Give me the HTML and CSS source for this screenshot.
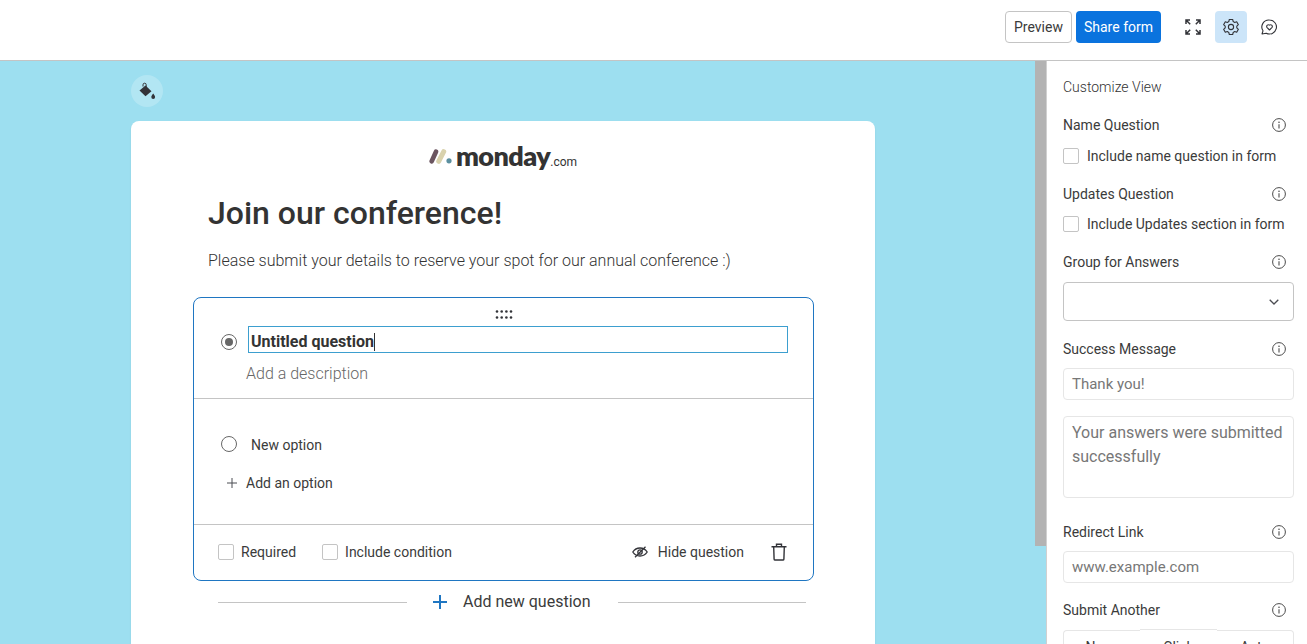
FILE: index.html
```html
<!DOCTYPE html>
<html lang="en">
<head>
<meta charset="utf-8">
<title>Form editor</title>
<link rel="stylesheet" href="styles.css">
</head>
<body>
<svg class="sprite" width="0" height="0" aria-hidden="true"><defs><symbol id="info" viewBox="0 0 14 14"><circle cx="7" cy="7" r="6.400" fill="none" stroke="#4b4b4b" stroke-width="1"/><path d="M7 6.200V10.500" stroke="#4b4b4b" stroke-width="1.100"/><circle cx="7" cy="4.200" r=".8" fill="#4b4b4b"/></symbol></defs></svg>
<header class="topbar">
  <button class="btn btn-outline">Preview</button>
  <button class="btn btn-primary">Share form</button>
  <span class="tool">
    <svg width="18" height="18" viewBox="0 0 18 18" fill="none" stroke="#323338" stroke-width="1.5"><path d="M2 6V2h4M2 2l4.200 4.200M16 6V2h-4M16 2l-4.200 4.200M2 12v4h4M2 16l4.200-4.200M16 12v4h-4M16 16l-4.200-4.200"/></svg>
  </span>
  <span class="tool tool-active">
    <svg width="18" height="18" viewBox="0 0 18 18" fill="none" stroke="#323338" stroke-width="1.1"><path d="M7.3 1.5h3.4l.5 2.1 1.5.8 2-.7 1.700 3-1.600 1.400v1.800l1.600 1.400-1.700 3-2-.7-1.500.8-.5 2.100H7.300l-.5-2.100-1.500-.8-2 .7-1.700-3L3.200 9.900V8.100L1.600 6.700l1.700-3 2 .7 1.500-.8z" stroke-linejoin="round"/><circle cx="9" cy="9" r="2.600"/></svg>
  </span>
  <span class="tool">
    <svg width="18" height="18" viewBox="0 0 18 18" fill="none" stroke="#323338" stroke-width="1.100"><path d="M9.500 2a7 7 0 1 1-3.300 13.200L2 16l1-3.200A7 7 0 0 1 9.500 2z" stroke-linejoin="round"/><path d="M9.500 12L6.900 9.300a1.700 1.700 0 0 1 2.600-2.100 1.700 1.700 0 0 1 2.600 2.100z" stroke-linejoin="round"/></svg>
  </span>
</header>
<main class="workspace">
  <section class="canvas">
    <div class="paint">
      <svg width="20" height="20" viewBox="0 0 20 20"><path d="M6 5.500V3.800a1.600 1.600 0 0 1 3.200 0V7" fill="none" stroke="#323338" stroke-width="1"/><path d="M2.500 9.500L8.500 4.500l6 5.800-6 5z" fill="#323338"/><path d="M16.200 12.500c1.100 1.500 1.900 2.500 1.900 3.500a1.900 1.900 0 0 1-3.800 0c0-1 .8-2 1.900-3.500z" fill="#323338"/></svg>
    </div>
    <article class="card">
      <div class="logo">
        <svg class="logo-mark" width="23" height="15" viewBox="0 0 23 15"><path d="M2.700 12.300L7 2.700" stroke="#6b5560" stroke-width="4.600" stroke-linecap="round"/><path d="M9.700 12.300L14.700 2.700" stroke="#d9d2ad" stroke-width="5" stroke-linecap="round"/><circle cx="20" cy="11.800" r="2.600" fill="#5b8f9f"/></svg>
        <span class="logo-word">monday</span><span class="logo-com">.com</span>
      </div>
      <h1 class="title">Join our conference!</h1>
      <p class="subtitle">Please submit your details to reserve your spot for our annual conference :)</p>
      <div class="question">
        <div class="handle">
          <svg width="18" height="9" viewBox="0 0 18 9" fill="#323338"><circle cx="2" cy="1.500" r="1.300"/><circle cx="6.700" cy="1.500" r="1.300"/><circle cx="11.400" cy="1.500" r="1.300"/><circle cx="16" cy="1.500" r="1.300"/><circle cx="2" cy="7.500" r="1.300"/><circle cx="6.700" cy="7.500" r="1.300"/><circle cx="11.400" cy="7.500" r="1.300"/><circle cx="16" cy="7.500" r="1.300"/></svg>
        </div>
        <div class="q-head">
          <span class="radio radio-on"></span>
          <div class="q-input"><span class="q-text">Untitled question</span><span class="caret"></span></div>
        </div>
        <div class="q-desc">Add a description</div>
        <div class="q-options">
          <div class="option"><span class="radio"></span><span class="option-label">New option</span></div>
          <div class="add-option">
            <svg width="10" height="10" viewBox="0 0 10 10" stroke="#4b4c52" stroke-width="1"><path d="M5 0v10M0 5h10"/></svg>
            <span>Add an option</span>
          </div>
        </div>
        <div class="q-foot">
          <label class="check"><span class="box"></span>Required</label>
          <label class="check"><span class="box"></span>Include condition</label>
          <span class="hide-q">
            <svg width="16" height="12" viewBox="0 0 16 12" fill="none" stroke="#323338" stroke-width="1.300"><path d="M.8 6C2.500 3.400 5 2 8 2s5.500 1.400 7.200 4C13.500 8.600 11 10 8 10S2.500 8.600.8 6z"/><circle cx="8" cy="6" r="2.200"/><path d="M13.500.8L3 11.200"/></svg>
            Hide question
          </span>
          <svg class="trash" width="16" height="18" viewBox="0 0 16 18" fill="none" stroke="#323338" stroke-width="1.400"><path d="M.5 3.700h15M5.500 3.500V1.200h5v2.300M2.700 3.700l.4 12.400a1 1 0 0 0 1 .9h7.800a1 1 0 0 0 1-.9l.4-12.400"/></svg>
        </div>
      </div>
      <div class="add-question">
        <span class="rule rule-left"></span>
        <svg class="add-plus" width="14" height="14" viewBox="0 0 14 14" stroke="#1f76c2" stroke-width="2"><path d="M7 0v14M0 7h14"/></svg>
        <span class="add-label">Add new question</span>
        <span class="rule rule-right"></span>
      </div>
    </article>
    <div class="scroll-thumb"></div>
  </section>
  <aside class="panel">
    <h2 class="panel-title">Customize View</h2>

    <div class="field-head field-first"><span>Name Question</span><svg class="info"><use href="#info"/></svg></div>
    <label class="panel-check"><span class="box"></span>Include name question in form</label>

    <div class="field-head field-updates"><span>Updates Question</span><svg class="info"><use href="#info"/></svg></div>
    <label class="panel-check panel-check-tight"><span class="box"></span>Include Updates section in form</label>

    <div class="field-head field-group"><span>Group for Answers</span><svg class="info"><use href="#info"/></svg></div>
    <div class="select">
      <svg width="10" height="6" viewBox="0 0 10 6" fill="none" stroke="#4b4c52" stroke-width="1.300"><path d="M.7.7L5 5l4.300-4.300"/></svg>
    </div>

    <div class="field-head field-success"><span>Success Message</span><svg class="info"><use href="#info"/></svg></div>
    <div class="input input-thanks">Thank you!</div>
    <div class="textarea">Your answers were submitted successfully</div>

    <div class="field-head field-redirect"><span>Redirect Link</span><svg class="info"><use href="#info"/></svg></div>
    <div class="input input-link">www.example.com</div>

    <div class="field-head field-submit"><span>Submit Another</span><svg class="info"><use href="#info"/></svg></div>
    <div class="segments">
      <span class="segment">None</span>
      <span class="segment segment-mid">Click</span>
      <span class="segment">Auto</span>
    </div>
  </aside>
</main>
</body>
</html>
```
FILE: styles.css
```css
* { box-sizing: border-box; }
html, body { margin: 0; height: 100%; overflow: hidden; }
body {
  font-family: Roboto, "Liberation Sans", sans-serif;
  color: #3b3b3b;
  background: #fff;
  display: flex;
  flex-direction: column;
}
.sprite { display: none; }
.topbar {
  height: 61px;
  flex: none;
  display: flex;
  align-items: flex-start;
  padding: 11px 22px 0 0;
  justify-content: flex-end;
  border-bottom: 1px solid #c4c4c4;
  background: #fff;
}
.btn {
  height: 32px;
  border-radius: 4px;
  font: 400 14px/1 Roboto, sans-serif;
  padding: 0;
}
.btn-outline {
  width: 67px;
  margin-right: 4px;
  background: #fff;
  color: #3b3b3b;
  border: 1px solid #c4c4c4;
}
.btn-primary {
  width: 85px;
  margin-right: 10px;
  background: #0a73de;
  color: #fff;
  border: 0;
}
.tool {
  width: 32px;
  height: 32px;
  margin-left: 6px;
  border-radius: 4px;
  display: flex;
  align-items: center;
  justify-content: center;
}
.tool-active { background: #cce5f9; }
.workspace { flex: 1; display: flex; min-height: 0; }
.canvas {
  flex: none;
  width: 1046px;
  position: relative;
  background: #9ddff0;
  padding: 14px 0 0 131px;
  overflow: hidden;
}
.paint {
  width: 32px;
  height: 32px;
  border-radius: 50%;
  background: rgba(255, 255, 255, .22);
  display: flex;
  align-items: center;
  justify-content: center;
}
.card {
  width: 744px;
  height: 600px;
  margin-top: 14px;
  background: #fff;
  border-radius: 8px;
  padding-top: 21px;
  box-shadow: 0 1px 2px rgba(0, 0, 0, .08);
}
.logo {
  display: flex;
  justify-content: center;
  align-items: baseline;
  height: 28px;
}
.logo-mark { margin-right: 4px; align-self: center; }
.logo-word {
  font: 800 27px/28px Lato, sans-serif;
  color: #333;
  letter-spacing: -.55px;
}
.logo-com { font: 400 12px/1 Roboto, sans-serif; color: #333; }
.title {
  margin: 21px 0 0 77px;
  font: 500 32px/44px Roboto, sans-serif;
  color: #333;
}
.subtitle {
  margin: 14px 0 0 77px;
  font: 300 16px/24px Roboto, sans-serif;
  color: #333;
  height: 24px;
}
.question {
  width: 621px;
  height: 284px;
  margin: 24px 0 0 62px;
  border: 1px solid #1f76c2;
  border-radius: 8px;
  display: flex;
  flex-direction: column;
}
.handle { height: 28px; padding-top: 12px; display: flex; justify-content: center; }
.handle svg { display: block; }
.q-head { display: flex; align-items: center; height: 27px; padding-left: 27px; }
.radio {
  width: 16px;
  height: 16px;
  border: 1px solid #676767;
  border-radius: 50%;
  flex: none;
  display: flex;
  align-items: center;
  justify-content: center;
}
.radio-on { margin-top: 5px; }
.radio-on::after {
  content: "";
  width: 8px;
  height: 8px;
  border-radius: 50%;
  background: #676767;
}
.q-input {
  width: 540px;
  height: 27px;
  margin-left: 11px;
  border: 1px solid #3d9fcf;
  padding: 4px 0 0 2px;
  display: flex;
  align-items: center;
}
.q-text { font: 700 16px/1 Roboto, sans-serif; color: #333; }
.caret { width: 1px; height: 18px; background: #333; }
.q-desc {
  height: 46px;
  padding: 10px 0 0 52px;
  font: 300 16px/22px Roboto, sans-serif;
  color: #676767;
  border-bottom: 1px solid #c4c4c4;
}
.q-options { height: 126px; border-bottom: 1px solid #c4c4c4; padding: 37px 0 0 27px; }
.option { display: flex; align-items: center; height: 16px; }
.option-label { margin-left: 14px; font: 400 14px/16px Roboto, sans-serif; position: relative; top: 1px; }
.add-option {
  display: flex;
  align-items: center;
  margin-top: 23px;
  padding-left: 6px;
  font: 400 14px/16px Roboto, sans-serif;
  height: 16px;
}
.add-option span { margin-left: 9px; }
.q-foot {
  flex: 1;
  display: flex;
  align-items: center;
  padding: 0 26px 2px 24px;
  font: 400 14px/16px Roboto, sans-serif;
}
.check { display: flex; align-items: center; margin-right: 26px; }
.box {
  width: 16px;
  height: 16px;
  border: 1px solid #c4c4c4;
  border-radius: 2px;
  margin-right: 7px;
  flex: none;
}
.hide-q { display: flex; align-items: center; margin-left: auto; gap: 10px; }
.trash { margin-left: 27px; }
.add-question { display: flex; align-items: center; height: 42px; margin-left: 87px; white-space: nowrap; }
.rule { height: 1px; background: #c4c4c4; flex: none; margin-top: 1px; }
.rule-left { width: 189px; }
.rule-right { width: 188px; margin-left: 27px; }
.add-plus { margin-left: 26px; flex: none; }
.add-label { margin-left: 16px; font: 400 16px/1 Roboto, sans-serif; flex: none; }
.scroll-thumb {
  position: absolute;
  right: 0;
  top: 0;
  width: 11px;
  height: 485px;
  background: #b3b3b3;
}
.panel {
  flex: 1;
  min-width: 0;
  padding: 0 13px 0 16px;
  background: #fff;
  border-left: 1px solid #d0d0d0;
  overflow: hidden;
  font-size: 14px;
  line-height: 16px;
}
.panel-title { margin: 18px 0 0; font: 300 14px/16px Roboto, sans-serif; color: #333; }
.field-head { display: flex; justify-content: space-between; align-items: center; height: 16px; }
.info { width: 14px; height: 14px; margin-right: 8px; flex: none; }
.field-first { margin-top: 22px; }
.field-updates { margin-top: 22px; }
.field-group { margin-top: 22px; }
.field-success { margin-top: 20px; }
.field-redirect { margin-top: 26px; }
.field-submit { margin-top: 19px; }
.panel-check { display: flex; align-items: center; margin-top: 15px; height: 16px; white-space: nowrap; }
.panel-check-tight { margin-top: 14px; }
.panel-check .box { margin-right: 8px; }
.select {
  height: 39px;
  margin-top: 12px;
  border: 1px solid #c4c4c4;
  border-radius: 4px;
  display: flex;
  align-items: center;
  justify-content: flex-end;
  padding-right: 14px;
}
.input, .textarea {
  border: 1px solid #e6e6e6;
  border-radius: 4px;
  padding: 0 8px;
  font-size: 15px;
  color: #777;
}
.input { height: 32px; line-height: 31px; }
.input-thanks { margin-top: 11px; }
.input-link { margin-top: 11px; }
.textarea { height: 82px; margin-top: 16px; padding-top: 4px; line-height: 24px; font-size: 16px; }
.segments { display: flex; margin-top: 12px; }
.segment {
  flex: 1;
  height: 40px;
  text-align: center;
  line-height: 28px;
  padding-top: 2px;
  border: 1px solid #e6e6e6;
  border-right: 0;
  border-radius: 4px 0 0 0;
}
.segment-mid { border-radius: 0; border-left: 0; position: relative; top: -1px; padding-top: 3px; }
.segment:last-child { border-right: 1px solid #e6e6e6; border-left: 0; border-radius: 0 4px 0 0; }
```
